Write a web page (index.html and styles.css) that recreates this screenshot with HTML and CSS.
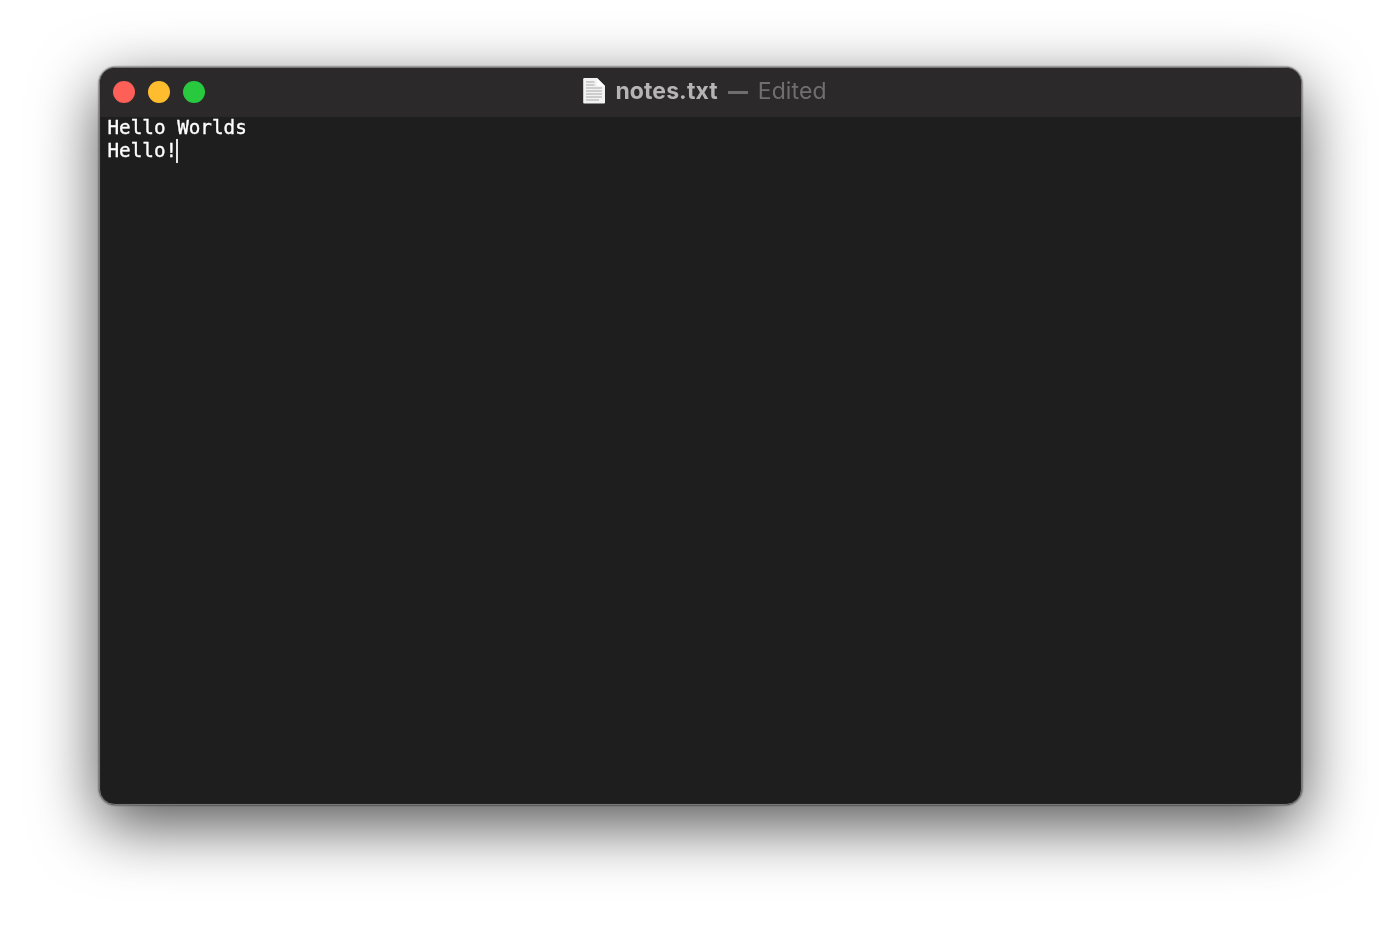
FILE: index.html
```html
<!DOCTYPE html>
<html lang="en">
<head>
<meta charset="utf-8">
<title>notes.txt</title>
<link rel="stylesheet" href="styles.css">
</head>
<body>
<main class="window">
  <header class="titlebar">
    <div class="lights">
      <span class="light light-red"></span>
      <span class="light light-yellow"></span>
      <span class="light light-green"></span>
    </div>
    <div class="title">
      <svg class="doc" width="24" height="28" viewBox="0 0 24 28" aria-hidden="true">
        <path d="M2.500 1H15L23 9V25.500C23 26.300 22.500 26.500 21.500 26.500H2.500C1.700 26.500 1.200 26.100 1.200 25.500V2.300C1.200 1.500 1.700 1 2.500 1Z" fill="#f2f2f2"/>
        <path d="M15 1V9H23Z" fill="#fff"/>
        <path d="M4 5H12.500M4 8H12.500M4 11H20M4 14H20M4 17H20M4 20H20M4 23H17" stroke="#cdcdcd" stroke-width="2" fill="none"/>
      </svg>
      <span class="filename">notes.txt</span>
      <span class="dash"></span>
      <span class="status">Edited</span>
    </div>
  </header>
  <section class="editor">
    <div class="line">Hello Worlds</div>
    <div class="line">Hello!<span class="caret"></span></div>
  </section>
</main>
</body>
</html>
```
FILE: styles.css
```css
* { box-sizing: border-box; }
html, body { height: 100%; }
body {
  margin: 0;
  padding: 67px 98.500px 130px;
  background: #fff;
  overflow: hidden;
}
.window {
  height: 738px;
  display: flex;
  flex-direction: column;
  border-radius: 16px;
  overflow: hidden;
  background: #1e1e1e;
  border: 1px solid #777;
  box-shadow: inset 0 0 0 1px #222;
  filter: drop-shadow(0 0 1px rgba(0,0,0,.8)) drop-shadow(0 20px 32px rgba(0,0,0,.68));
}
.titlebar {
  position: relative;
  flex: none;
  height: 49px;
  display: flex;
  align-items: center;
  justify-content: center;
  background: #2b292a;
}
.lights {
  position: absolute;
  left: 13px;
  top: 13px;
  display: flex;
  gap: 14px;
}
.light {
  width: 22px;
  height: 22px;
  margin-right: -1px;
  border-radius: 50%;
}
.light-red { background: #fe5f57; }
.light-yellow { background: #febc2e; }
.light-green { background: #28c93f; }
.title {
  display: flex;
  align-items: center;
  margin: 0 0 3px 9px;
  font-family: "Inter", "Liberation Sans", sans-serif;
  font-size: 23px;
  line-height: 28px;
}
.doc { margin-right: 9px; }
.filename { font-weight: 700; color: #b5b5b5; letter-spacing: .1px; }
.dash {
  width: 20px;
  height: 3px;
  margin: 2px 10px 0 10px;
  background: #6e6e6e;
}
.status { color: #6f6f6f; letter-spacing: .1px; }
.editor {
  flex: 1;
  margin-top: -1px;
  padding: 0 8px;
  font-family: "DejaVu Sans Mono", monospace;
  font-size: 19.300px;
  line-height: 23px;
  color: #fff;
}
.line {
  height: 23px;
  white-space: pre;
  -webkit-text-stroke: .35px #fff;
}
.caret {
  display: inline-block;
  width: 2px;
  height: 24px;
  margin-left: -1px;
  background: #e6e6e6;
  vertical-align: -6px;
}
```
